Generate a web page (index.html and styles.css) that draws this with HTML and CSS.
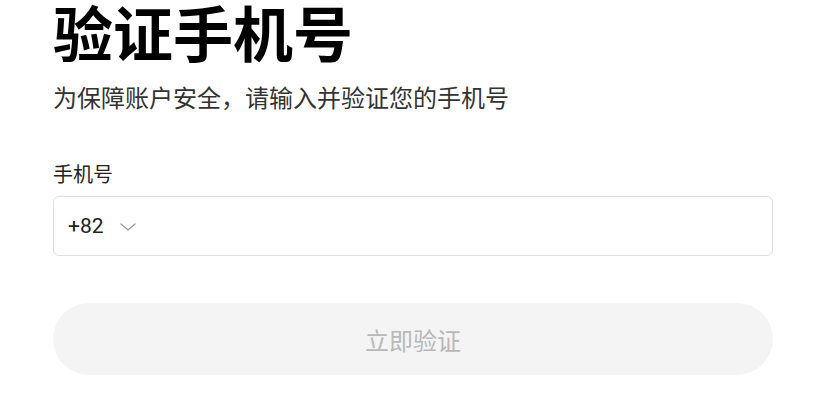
FILE: index.html
```html
<!DOCTYPE html>
<html lang="zh-CN">
<head>
<meta charset="utf-8">
<link rel="stylesheet" href="styles.css">
</head>
<body>
<main class="page">
  <h1 class="title">验证手机号</h1>
  <p class="subtitle">为保障账户安全，请输入并验证您的手机号</p>
  <label class="label">手机号</label>
  <div class="field">
    <span class="code">+82</span>
    <svg class="chevron" width="16" height="8" viewBox="0 0 16 8" aria-hidden="true">
      <path d="M1 1 L8 7 L15 1" fill="none" stroke="#9a9a9a" stroke-width="1.3" stroke-linecap="round" stroke-linejoin="round"/>
    </svg>
  </div>
  <button class="submit" type="button">立即验证</button>
</main>
</body>
</html>
```
FILE: styles.css
```css
html, body {
  margin: 0;
  padding: 0;
  background: #ffffff;
}
body {
  font-family: "Noto Sans CJK SC", "Noto Sans", sans-serif;
  color: #111;
}
.page {
  width: 720px;
  padding: 0 0 0 53px;
  display: flex;
  flex-direction: column;
}
.title {
  margin: 0;
  font-size: 60px;
  line-height: 62px;
  font-weight: 700;
  color: #000;
}
.subtitle {
  margin: 19px 0 0;
  font-size: 24px;
  line-height: 32px;
  color: #333;
}
.label {
  margin-top: 47px;
  font-size: 20px;
  line-height: 28px;
  color: #222;
}
.field {
  margin-top: 8px;
  height: 58px;
  border: 1px solid #dedede;
  border-radius: 6px;
  display: flex;
  align-items: center;
  padding: 0 14px;
  gap: 16px;
}
.code {
  font-family: Roboto, "Liberation Sans", sans-serif;
  font-size: 21px;
  color: #222;
}
.chevron {
  display: block;
  margin-top: 2px;
}
.submit {
  margin-top: 47px;
  height: 72px;
  border: none;
  border-radius: 36px;
  background: #f4f4f4;
  color: #b8b8b8;
  font-family: "Noto Sans CJK SC", sans-serif;
  font-size: 24px;
  padding: 0;
}
```
